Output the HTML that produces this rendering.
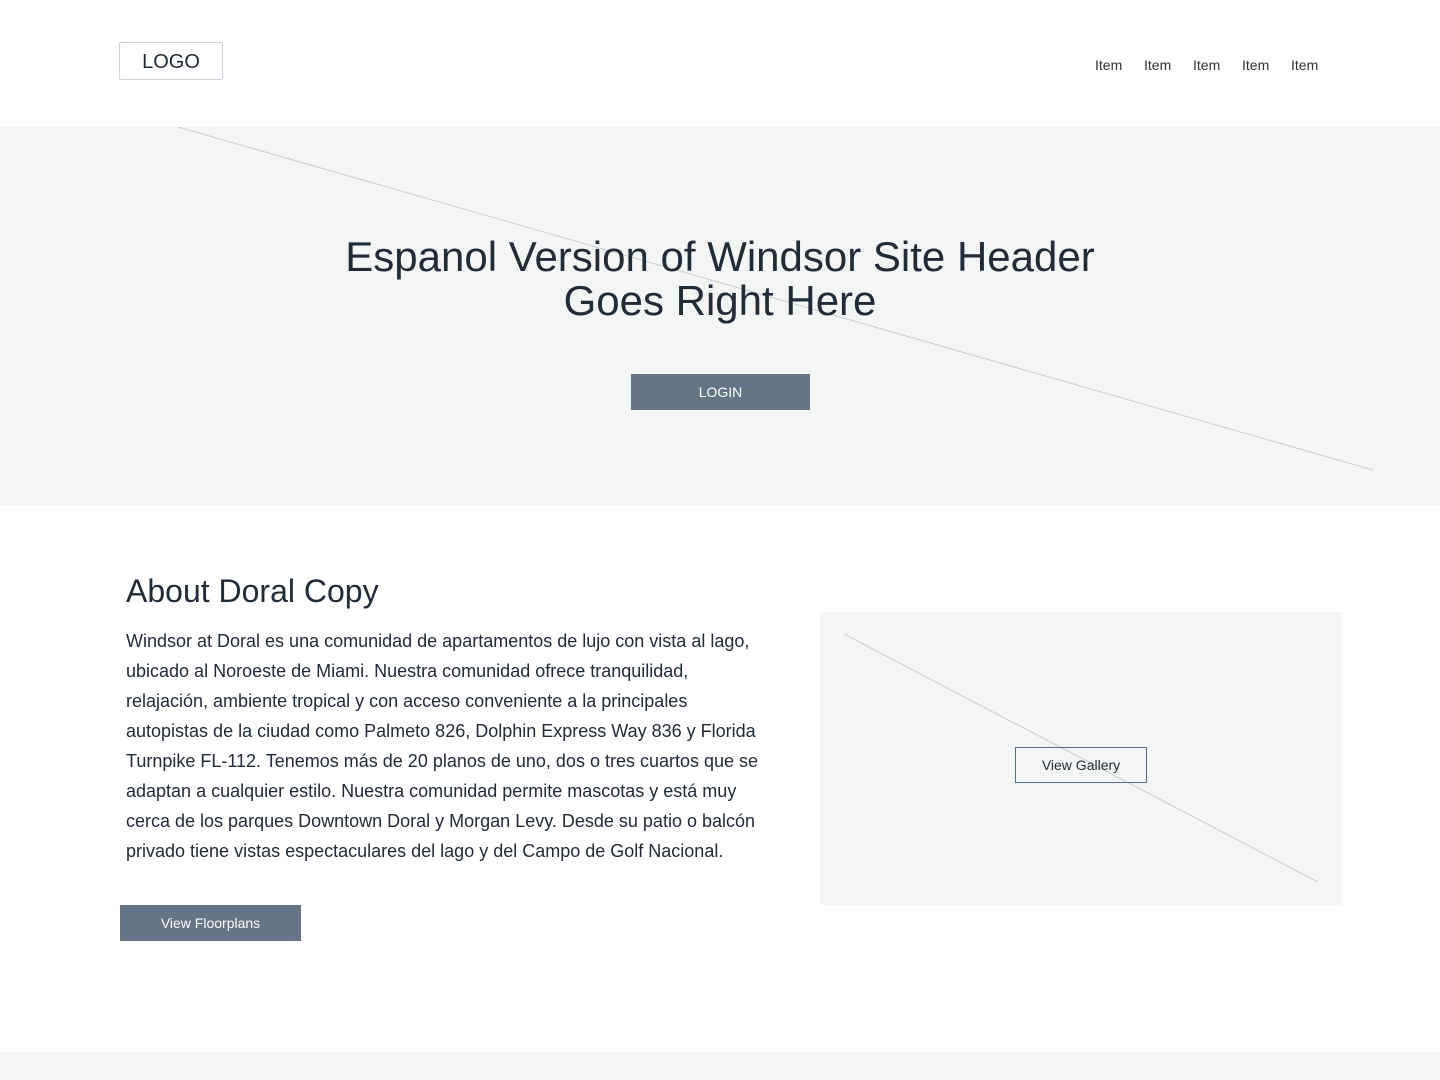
<!DOCTYPE html>
<html><head><meta charset="utf-8"><style>
*{margin:0;padding:0;box-sizing:border-box}
body{width:1440px;height:1080px;background:#fff;font-family:"Liberation Sans",sans-serif;color:#222b38;position:relative;overflow:hidden}
.abs{position:absolute}
.logo{left:119px;top:42px;width:104px;height:38px;border:1px solid #c9d3dd;border-radius:2px;font-size:20px;text-align:center;line-height:38px;color:#222b38}
.nav{top:57px;font-size:14px;color:#333}
.hero{left:0;top:127px;width:1440px;height:378px;background:#f4f6f5}
h1{position:absolute;left:0;width:1440px;top:235px;text-align:center;font-weight:400;font-size:42px;line-height:44px;color:#222b38}
.btn{background:#667585;color:#fff;font-size:14px;text-align:center}
h2{position:absolute;left:126px;top:573px;font-weight:400;font-size:32px;color:#222b38}
p{position:absolute;left:126px;top:626px;white-space:nowrap;font-size:18px;line-height:30px;color:#222b38}
.gal{left:820px;top:612px;width:522px;height:293px;background:#f4f6f5}
.vg{left:1015px;top:747px;width:132px;height:36px;border:1px solid #5a6a8a;font-size:14px;line-height:34px;text-align:center;color:#222b38}
.foot{left:0;top:1052px;width:1440px;height:28px;background:#f4f6f5}
</style></head><body>
<div class="abs logo">LOGO</div>
<div class="abs nav" style="left:1095px">Item</div>
<div class="abs nav" style="left:1144px">Item</div>
<div class="abs nav" style="left:1193px">Item</div>
<div class="abs nav" style="left:1242px">Item</div>
<div class="abs nav" style="left:1291px">Item</div>
<div class="abs hero"></div>
<svg class="abs" style="left:0;top:0" width="1440" height="1080"><line x1="178" y1="127" x2="1373" y2="470" stroke="#c8cccc" stroke-width="1"/></svg>
<h1>Espanol Version of Windsor Site Header<br>Goes Right Here</h1>
<div class="abs btn" style="left:631px;top:374px;width:179px;height:36px;line-height:36px">LOGIN</div>
<h2>About Doral Copy</h2>
<p>Windsor at Doral es una comunidad de apartamentos de lujo con vista al lago,<br>ubicado al Noroeste de Miami. Nuestra comunidad ofrece tranquilidad,<br>relajación, ambiente tropical y con acceso conveniente a la principales<br>autopistas de la ciudad como Palmeto 826, Dolphin Express Way 836 y Florida<br>Turnpike FL-112. Tenemos más de 20 planos de uno, dos o tres cuartos que se<br>adaptan a cualquier estilo. Nuestra comunidad permite mascotas y está muy<br>cerca de los parques Downtown Doral y Morgan Levy. Desde su patio o balcón<br>privado tiene vistas espectaculares del lago y del Campo de Golf Nacional.</p>
<div class="abs btn" style="left:120px;top:905px;width:181px;height:36px;line-height:36px">View Floorplans</div>
<div class="abs gal"></div>
<svg class="abs" style="left:0;top:0" width="1440" height="1080"><line x1="844" y1="634" x2="1318" y2="882" stroke="#c8cccc" stroke-width="1"/></svg>
<div class="abs vg">View Gallery</div>
<div class="abs foot"></div>
</body></html>
